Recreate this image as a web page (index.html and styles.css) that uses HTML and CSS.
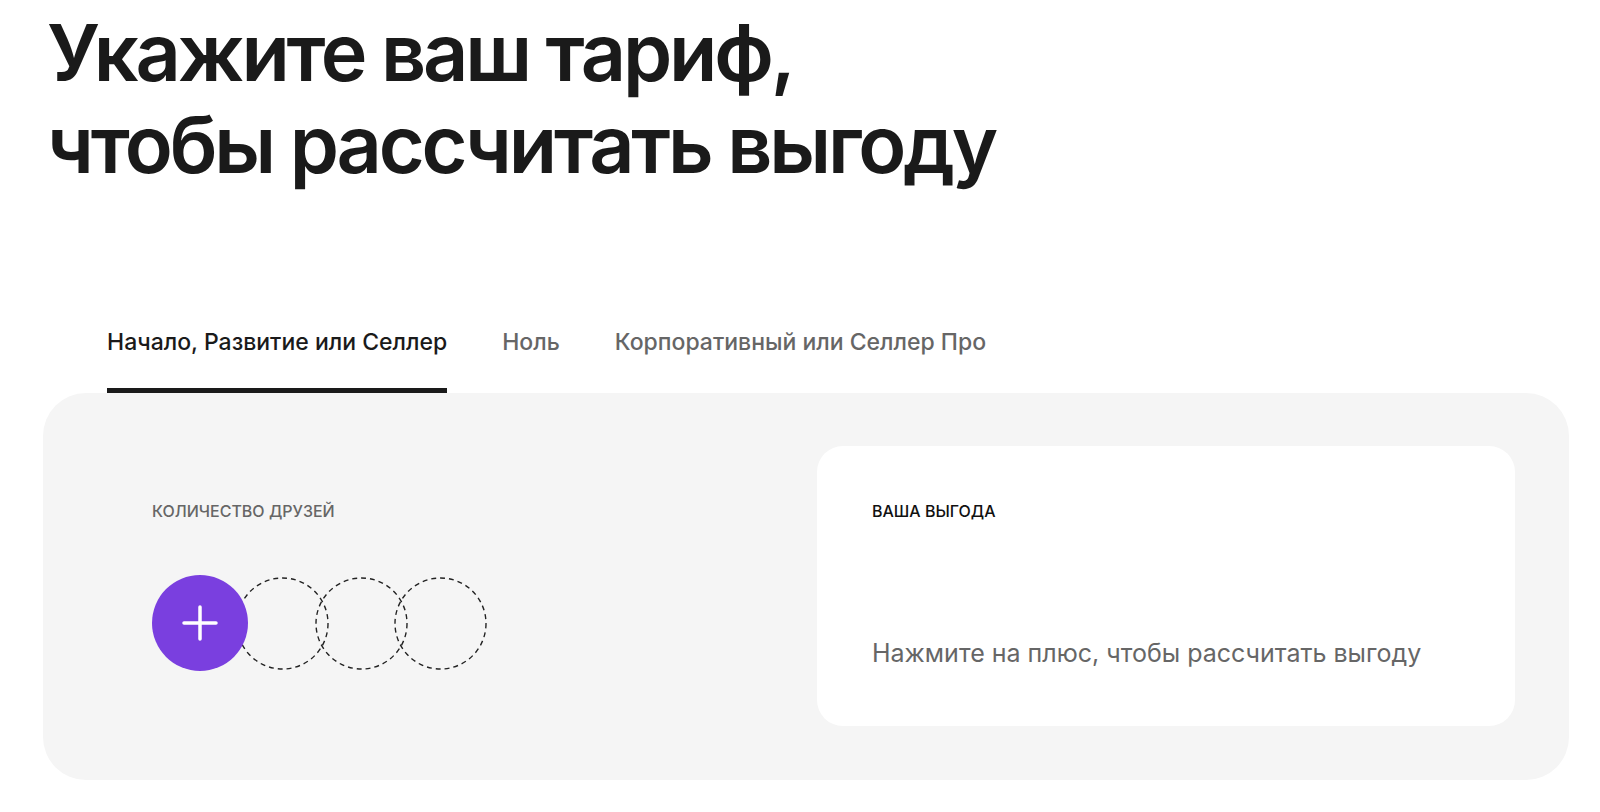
FILE: index.html
```html
<!doctype html>
<html>
<head>
<meta charset="utf-8">
<link rel="stylesheet" href="styles.css">
</head>
<body>
<div class="page">
	<h1 class="title">Укажите ваш тариф,<br>чтобы рассчитать выгоду</h1>

	<div class="tabs">
		<div class="tab active">Начало, Развитие или Селлер</div>
		<div class="tab">Ноль</div>
		<div class="tab">Корпоративный или Селлер Про</div>
	</div>

	<div class="calc">
		<div class="friends">
			<div class="label">Количество друзей</div>
			<div class="circles">
				<div class="add">
					<svg width="36" height="36" viewBox="0 0 36 36"><path d="M18 2v32M2 18h32" stroke="#fff" stroke-width="3.5" stroke-linecap="round" fill="none"/></svg>
				</div>
				<svg class="slot" width="93" height="93" viewBox="0 0 94 94"><circle cx="47" cy="47" r="46" fill="none" stroke="#222" stroke-width="1.4" stroke-dasharray="5 4"/></svg>
				<svg class="slot" width="93" height="93" viewBox="0 0 94 94"><circle cx="47" cy="47" r="46" fill="none" stroke="#222" stroke-width="1.4" stroke-dasharray="5 4"/></svg>
				<svg class="slot" width="93" height="93" viewBox="0 0 94 94"><circle cx="47" cy="47" r="46" fill="none" stroke="#222" stroke-width="1.4" stroke-dasharray="5 4"/></svg>
			</div>
		</div>
		<div class="result">
			<div class="label dark">Ваша выгода</div>
			<div class="hint">Нажмите на плюс, чтобы рассчитать выгоду</div>
		</div>
	</div>
</div>
</body>
</html>
```

FILE: styles.css
```css
*{margin:0; padding:0; box-sizing:border-box;}
body{font-family:Inter, "Noto Sans", sans-serif; color:#1a1a1a; background:#fff;}
.page{padding:0 31px 0 43px;}

.title{font-size:79px; line-height:92px; font-weight:600; letter-spacing:-3.2px; margin-top:6px; padding-left:4px;}

.tabs{display:flex; gap:55px; padding-left:64px; margin-top:137px;}
.tab{font-size:23px; line-height:30px; font-weight:500; color:#666; padding-bottom:31px; border-bottom:5px solid transparent;}
.tab.active{color:#1a1a1a; border-bottom-color:#1a1a1a;}

.calc{display:grid; grid-template-columns:1fr 1fr; gap:22px; background:#f5f5f5; border-radius:43px; padding:53px 54px 54px;}
.friends{padding:55px 55px 55px;}
.label{font-size:16px; line-height:20px; font-weight:500; text-transform:uppercase; color:#666;}
.label.dark{color:#111;}

.circles{display:flex; align-items:center; margin-top:54px;}
.add{width:96px; height:96px; border-radius:50%; background:#7a3fdf; display:flex; align-items:center; justify-content:center; position:relative; z-index:1;}
.slot{display:block; margin-left:-14px;}
.add + .slot{margin-left:-12px;}

.result{background:#fff; border-radius:26px; padding:55px 55px 57px; display:flex; flex-direction:column;}
.hint{margin-top:auto; font-size:25px; line-height:32px; color:#666;}
```
